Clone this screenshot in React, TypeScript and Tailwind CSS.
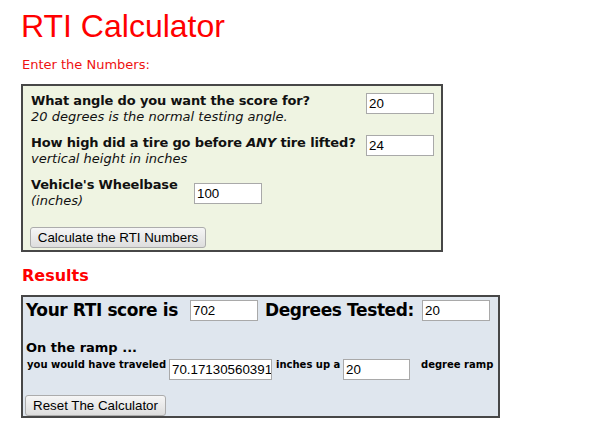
import React from 'react';

// Small bordered text field, old-school form style
function Field({ value, width = 'w-[68px]' }: { value: string; width?: string }) {
  return (
    <input
      type="text"
      defaultValue={value}
      className={`${width} h-[21px] shrink-0 border border-[#a9a9a9] bg-white pl-[2px] text-[13.33px] font-normal tracking-normal text-black outline-none font-['Liberation_Sans',Arial,sans-serif]`}
    />
  );
}

function Btn({ children, width }: { children: React.ReactNode; width: string }) {
  return (
    <button
      type="button"
      className={`${width} h-[21px] rounded-[3px] border border-[#acacac] bg-gradient-to-b from-[#f6f6f6] to-[#dddddd] text-[13.33px] leading-none text-black font-['Liberation_Sans',Arial,sans-serif]`}
    >
      {children}
    </button>
  );
}

export default function App() {
  return (
    <div className="min-h-screen bg-white pl-[21px] text-[13px] text-[#111] font-['DejaVu_Sans',Verdana,sans-serif]">
      <h1 className="mt-[8px] text-[32px] leading-[37px] text-[#ff0000] font-['Liberation_Sans',Arial,sans-serif]">
        RTI Calculator
      </h1>
      <p className="mt-[12px] pl-[1px] text-[13px] leading-[16px] text-[#ee1111]">Enter the Numbers:</p>

      {/* Input panel */}
      <div className="mt-[11px] flex h-[168px] w-[422px] flex-col border-2 border-[#474747] bg-[#eff4e2] pl-[8px] pt-[7px]">
        <div className="flex items-start">
          <div className="w-[335px] leading-[16px]">
            <div className="font-bold tracking-[-0.15px]">What angle do you want the score for?</div>
            <div className="italic">20 degrees is the normal testing angle.</div>
          </div>
          <Field value="20" />
        </div>
        <div className="mt-[10px] flex items-start">
          <div className="w-[335px] leading-[16px]">
            <div className="font-bold tracking-[-0.15px]">
              How high did a tire go before <i>ANY</i> tire lifted?
            </div>
            <div className="italic">vertical height in inches</div>
          </div>
          <Field value="24" />
        </div>
        <div className="mt-[10px] flex items-center">
          <div className="w-[163px] leading-[16px]">
            <div className="font-bold tracking-[-0.15px]">Vehicle's Wheelbase</div>
            <div className="italic">(inches)</div>
          </div>
          <Field value="100" />
        </div>
        <div className="mt-[18px] -ml-[1px]">
          <Btn width="w-[176px]">Calculate the RTI Numbers</Btn>
        </div>
      </div>

      <h2 className="mt-[14px] pl-[1px] text-[16px] font-bold leading-[19px] text-[#ff0000]">Results</h2>

      {/* Results panel */}
      <div className="mt-[10px] flex h-[123px] w-[479px] flex-col border-2 border-[#474747] bg-[#dfe6ee] pl-[3px] pt-[3px]">
        <div className="flex h-[21px] items-center">
          <span className="w-[164px] text-[17px] font-bold leading-[21px] tracking-[-0.4px] text-black">
            Your RTI score is
          </span>
          <Field value="702" />
          <span className="ml-[7px] w-[157px] text-[17px] font-bold leading-[21px] tracking-[-0.4px] text-black">
            Degrees Tested:
          </span>
          <Field value="20" />
        </div>
        <div className="mt-[19px] font-bold leading-[16px] text-black">On the ramp ...</div>
        <div className="mt-[3px] flex items-start text-[10px] font-bold leading-[12px] text-black">
          <span className="w-[143px] pl-[1px]">you would have traveled</span>
          <Field value="70.17130560391473" width="w-[103px]" />
          <span className="w-[71px] pl-[4px]">inches up a</span>
          <Field value="20" width="w-[67px]" />
          <span className="pl-[11px]">degree ramp</span>
        </div>
        <div className="mt-[15px] -ml-[1px]">
          <Btn width="w-[141px]">Reset The Calculator</Btn>
        </div>
      </div>
    </div>
  );
}
